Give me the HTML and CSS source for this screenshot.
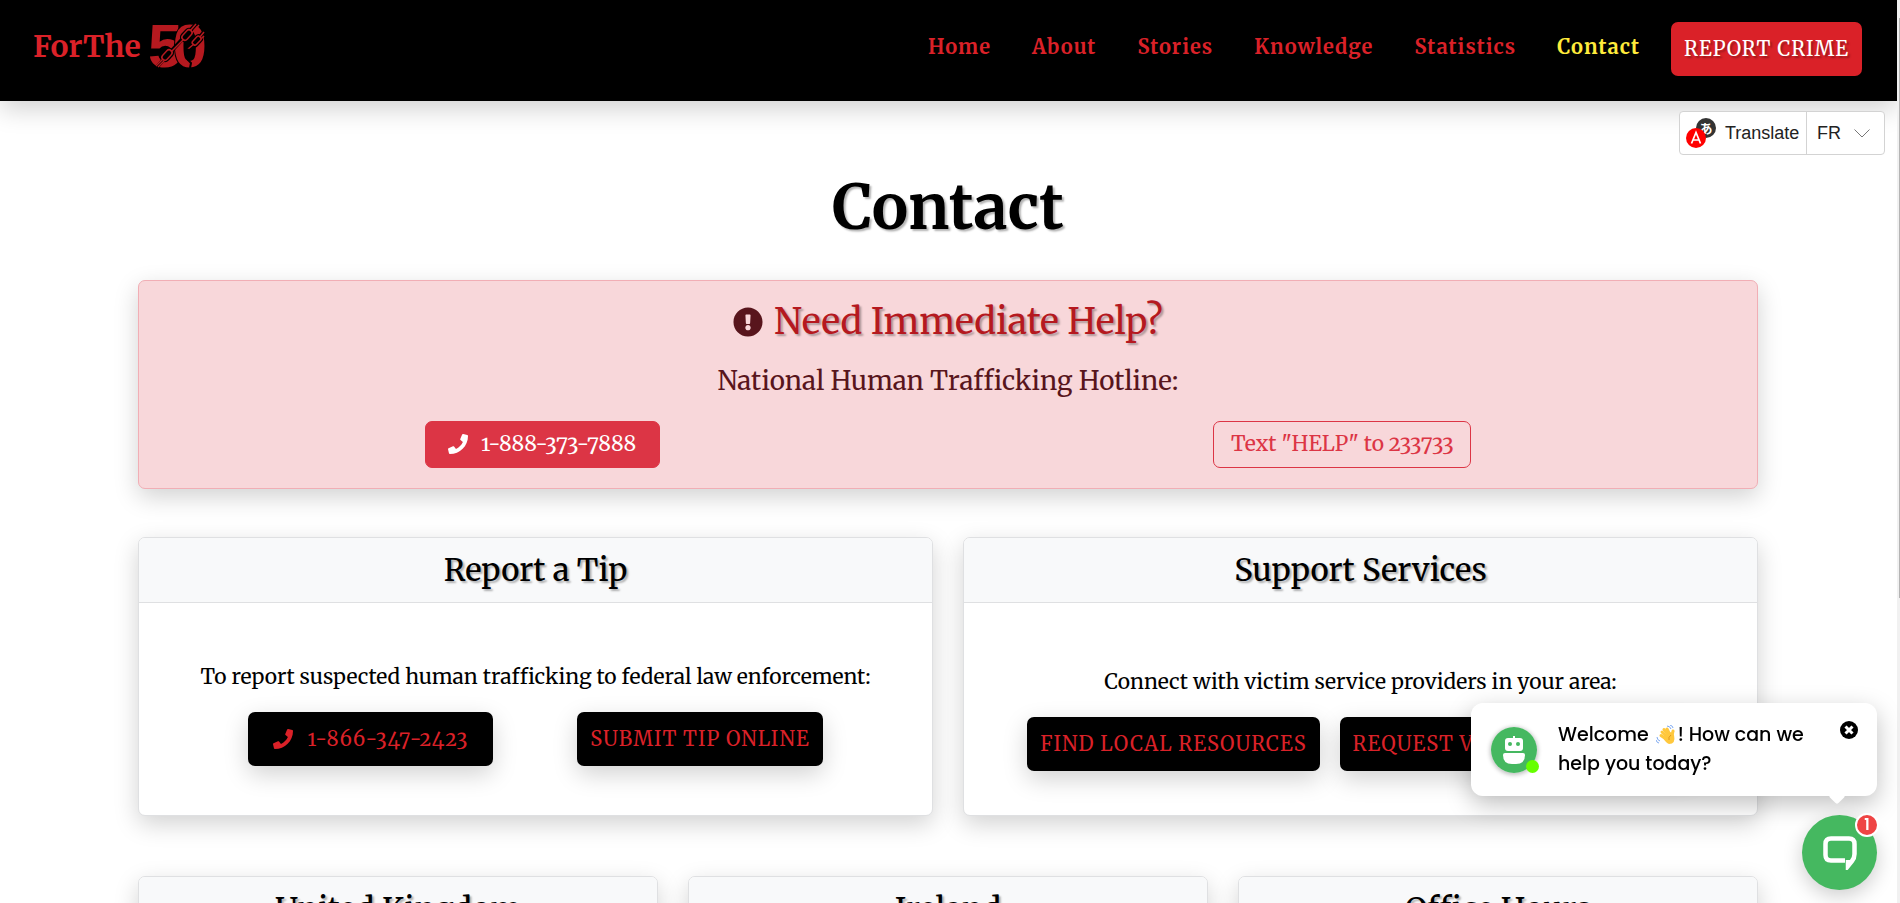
FILE: index.html
```html
<!DOCTYPE html>
<html lang="en">
<head>
<meta charset="utf-8">
<title>Contact | ForThe50</title>
<link rel="stylesheet" href="styles.css">
</head>
<body>
<div class="viewport">
  <div class="page">
    <header class="site-header">
      <a class="brand" href="#">
        <span>ForThe</span>
        <svg class="brand-logo" viewBox="10 14 54 45" role="img" aria-label="50">
          <text class="logo-digits" x="8" y="58">5<tspan class="logo-zero" dx="-10">0</tspan></text>
          <g class="chain-gap">
            <path d="M16 59 L57 14"/>
            <path d="M49 41 L64 23"/>
            <rect x="21" y="43" width="12" height="6" rx="3" transform="rotate(-47 27 46)"/>
            <rect x="41" y="23" width="12" height="6" rx="3" transform="rotate(-47 47 26)"/>
            <rect x="52" y="29" width="10" height="5" rx="2" transform="rotate(-47 57 32)"/>
          </g>
          <g class="chain">
            <path d="M16 57 L23 50 M18 58 L24 52 M31 43 L43 31 M50 22 L56 15 M52 24 L59 16"/>
            <rect x="21" y="43" width="12" height="6" rx="3" transform="rotate(-47 27 46)"/>
            <rect x="41" y="23" width="12" height="6" rx="3" transform="rotate(-47 47 26)"/>
            <rect x="52" y="29" width="10" height="5" rx="2" transform="rotate(-47 57 32)"/>
            <path d="M48 40 L54 35 M60 28 L64 23 M61 30 L64 27"/>
          </g>
          <path class="crack" d="M49 40 l-2 4 l4 3 l-3 4 l3 3 l-1 5"/>
        </svg>
      </a>
      <nav class="site-nav" aria-label="Main">
        <a href="#">Home</a>
        <a href="#">About</a>
        <a href="#">Stories</a>
        <a href="#">Knowledge</a>
        <a href="#">Statistics</a>
        <a class="active" href="#" aria-current="page">Contact</a>
        <a class="report-button" href="#">REPORT CRIME</a>
      </nav>
    </header>

    <div class="translate">
      <button class="translate-main" type="button">
        <svg class="translate-icon" viewBox="0 0 30 30" aria-hidden="true">
          <circle cx="20" cy="10" r="10" fill="#333"/>
          <text class="kana" x="20" y="15">あ</text>
          <circle cx="10" cy="20" r="10" fill="#f00"/>
          <path d="M5.500 25.500 L10 14.500 L14.500 25.500 M7 22 H13" fill="none" stroke="#fff" stroke-width="1.700"/>
        </svg>
        Translate
      </button>
      <button class="translate-lang" type="button">
        FR
        <svg class="chevron" viewBox="0 0 16 9" aria-hidden="true"><path d="M.5 .5 L8 8 L15.500 .5"/></svg>
      </button>
    </div>

    <main class="container">
      <h1>Contact</h1>

      <section class="alert">
        <h2>
          <svg class="alert-icon" viewBox="0 0 512 512" aria-hidden="true"><path d="M504 256c0 137-111 248-248 248S8 393 8 256 119 8 256 8s248 111 248 248zm-248 50c-25.400 0-46 20.600-46 46s20.600 46 46 46 46-20.600 46-46-20.600-46-46-46zm-43.700-165.300l7.400 136c.3 6.400 5.600 11.300 12 11.300h48.500c6.400 0 11.600-5 12-11.300l7.400-136c.4-6.900-5.100-12.700-12-12.700h-63.400c-6.900 0-12.300 5.800-11.900 12.700z"/></svg>
          <span>Need Immediate Help?</span>
        </h2>
        <p>National Human Trafficking Hotline:</p>
        <div class="alert-actions">
          <a class="hotline solid" href="#"><svg class="phone" viewBox="0 0 512 512" aria-hidden="true"><path d="M493.400 24.600l-104-24c-11.300-2.600-22.900 3.300-27.500 13.900l-48 112c-4.200 9.800-1.400 21.300 6.900 28l60.600 49.600c-36 76.700-98.900 140.500-177.200 177.200l-49.600-60.600c-6.800-8.300-18.200-11.100-28-6.900l-112 48C3.900 366.500-2 378.100.6 389.400l24 104C27.100 504.200 36.700 512 48 512c256.100 0 464-207.500 464-464 0-11.200-7.700-20.900-18.600-23.400z"/></svg>1-888-373-7888</a>
          <a class="hotline outline" href="#">Text "HELP" to 233733</a>
        </div>
      </section>

      <div class="cards two">
        <section class="card">
          <h3>Report a Tip</h3>
          <div class="card-body">
            <div class="card-content">
              <p>To report suspected human trafficking to federal law enforcement:</p>
              <div class="split">
                <a class="button" href="#"><svg class="phone" viewBox="0 0 512 512" aria-hidden="true"><path d="M493.400 24.600l-104-24c-11.300-2.600-22.900 3.300-27.500 13.900l-48 112c-4.200 9.800-1.400 21.300 6.900 28l60.600 49.600c-36 76.700-98.900 140.500-177.200 177.200l-49.600-60.600c-6.800-8.300-18.200-11.100-28-6.900l-112 48C3.900 366.500-2 378.100.6 389.400l24 104C27.100 504.200 36.700 512 48 512c256.100 0 464-207.500 464-464 0-11.200-7.700-20.900-18.600-23.400z"/></svg>1-866-347-2423</a>
                <a class="button" href="#">SUBMIT TIP ONLINE</a>
              </div>
            </div>
          </div>
        </section>
        <section class="card">
          <h3>Support Services</h3>
          <div class="card-body lower">
            <div class="card-content">
              <p>Connect with victim service providers in your area:</p>
              <div class="pair">
                <a class="button" href="#">FIND LOCAL RESOURCES</a>
                <a class="button" href="#">REQUEST VICTIM ASSISTANCE</a>
              </div>
            </div>
          </div>
        </section>
      </div>

      <div class="cards three">
        <section class="card"><h3>United Kingdom</h3></section>
        <section class="card"><h3>Ireland</h3></section>
        <section class="card"><h3>Office Hours</h3></section>
      </div>
    </main>
  </div>
  <div class="scroll-track"><div class="scroll-thumb"></div></div>
</div>

<aside class="chat">
  <div class="chat-bubble">
    <div class="avatar">
      <svg viewBox="0 0 46 46" aria-hidden="true">
        <circle cx="23" cy="23" r="23" fill="#45b860"/>
        <g fill="#fff">
          <rect x="22" y="9" width="2" height="4"/>
          <rect x="14" y="11" width="18" height="13" rx="3"/>
          <path d="M12 28q0-2 2-2h18q2 0 2 2q0 9-9 9h-4q-9 0-9-9z"/>
        </g>
        <circle cx="19" cy="17" r="2" fill="#45b860"/>
        <circle cx="27" cy="17" r="2" fill="#45b860"/>
      </svg>
      <span class="online"></span>
    </div>
    <p>Welcome <svg class="wave" viewBox="0 0 20 20" role="img" aria-label="waving hand"><g fill="none" stroke="#ffc83d" stroke-width="3" stroke-linecap="round"><path d="M12 13 L6 7"/><path d="M13 11 L8 4.500"/><path d="M14 10 L11 4"/><path d="M10 14 L5 10.500"/><path d="M16 11 L17 6"/></g><path d="M7 12 L15 7 L18 10 Q20 19 13 19 Q10 18 7 13z" fill="#ffc83d"/><path d="M13 15 Q12 12 15 10" fill="none" stroke="#e09a20"/><path d="M11 1 Q14 1 15 4 M14 0 Q17 1 17 3 M1 12 Q1 15 4 16 M0 15 Q1 18 3 18" fill="none" stroke="#7ba7f0"/></svg>! How can we help you today?</p>
    <button class="chat-close" type="button" aria-label="Close message">
      <svg viewBox="0 0 18 18" aria-hidden="true"><circle cx="9" cy="9" r="9"/><path d="M5.500 5.500 L12.500 12.500 M12.500 5.500 L5.500 12.500" stroke="#fff" stroke-width="3"/></svg>
    </button>
  </div>
  <button class="chat-launch" type="button" aria-label="Open chat, 1 new message">
    <svg viewBox="0 0 34 34" aria-hidden="true"><path d="M22 24.500 H8 Q2.500 24.500 2.500 19 V8 Q2.500 2.500 8 2.500 H26 Q31.500 2.500 31.500 8 V18 Q31.500 22 29 25 L25 30 V24" fill="none" stroke="#fff" stroke-width="4.500"/></svg>
    <span class="badge">1</span>
  </button>
</aside>
</body>
</html>
```
FILE: styles.css
```css
* { box-sizing: border-box; }

body {
  margin: 0;
  background: #fff;
  color: #000;
  font-family: "Merriweather", "DejaVu Serif Condensed", "DejaVu Serif", serif;
  font-size: 20px;
  line-height: 30px;
  font-variant-numeric: oldstyle-nums;
}

h1, h2, h3, p { margin: 0; font-weight: 400; }
a { color: inherit; text-decoration: none; }
button { border: 0; padding: 0; background: none; color: inherit; font: inherit; cursor: pointer; }
svg { display: block; flex: none; }

.viewport { display: flex; height: 100vh; overflow: hidden; }
.page { flex: 1; min-width: 0; }
.scroll-track { width: 3px; background: #f1f1f1; padding: 18px 0 0 2px; }
.scroll-thumb { height: 580px; background: #b4b4b4; }

.site-header {
  display: flex;
  justify-content: space-between;
  align-items: flex-start;
  padding: 22px 35px 25px 33px;
  background: #000;
  color: #da2128;
  box-shadow: 0 8px 24px rgba(0, 0, 0, .18);
}
.brand { display: flex; align-items: center; gap: 9px; padding-top: 1px; font-size: 30px; font-weight: 700; }
.brand-logo { width: 54px; height: 45px; overflow: visible; }
.logo-digits { font: 700 62px "Liberation Sans", sans-serif; fill: #b5191f; }
.logo-zero { stroke: #000; stroke-width: 2; paint-order: stroke; }
.chain-gap { fill: #000; stroke: #000; stroke-width: 4; }
.chain { fill: none; stroke: #b5191f; stroke-width: 1.500; }
.crack { fill: none; stroke: #000; stroke-width: 2; }

.site-nav { display: flex; align-items: flex-start; gap: 41px; font-weight: 700; letter-spacing: 1px; }
.site-nav a { padding: 10px 0; }
.site-nav .active { color: #ffeb3b; }
.site-nav .report-button {
  margin-left: -10px;
  padding: 12px 13px;
  border-radius: 7px;
  background: #da2128;
  color: #fff;
  font-weight: 400;
  text-shadow: 2px 2px 2px rgba(0, 0, 0, .3);
}

.translate {
  display: flex;
  width: 206px;
  height: 44px;
  margin: 10px 12px 0 auto;
  border: 1px solid #d3d3d3;
  border-radius: 4px;
  background: #fff;
  color: #222;
  font: 18px "Liberation Sans", Arial, sans-serif;
}
.translate-main { flex: 1; display: flex; align-items: center; gap: 9px; padding-left: 6px; }
.translate-icon { width: 30px; height: 30px; }
.kana { font: 700 13px "Noto Sans CJK JP", sans-serif; fill: #fff; text-anchor: middle; }
.translate-lang { display: flex; align-items: center; gap: 13px; padding: 0 14px 0 10px; border-left: 1px solid #d3d3d3; }
.chevron { width: 16px; height: 9px; }
.chevron path { fill: none; stroke: #777; }

.container { padding: 0 139px 0 138px; }

h1 {
  padding: 16px 0 36px;
  font-size: 61px;
  line-height: 73px;
  font-weight: 700;
  text-align: center;
  text-shadow: 2px 2px 2px rgba(0, 0, 0, .3);
}

.alert {
  padding: 20px 9px;
  border: 1px solid #f1aeb5;
  border-radius: 7px;
  background: #f8d7da;
  color: #58151c;
  text-align: center;
  box-shadow: 0 8px 24px rgba(0, 0, 0, .18);
}
.alert h2 {
  display: flex;
  justify-content: center;
  align-items: center;
  gap: 11px;
  color: #b5191f;
  font-size: 36px;
  line-height: 42px;
  text-shadow: 2px 2px 2px rgba(0, 0, 0, .3);
}
.alert-icon { width: 30px; height: 30px; fill: #58151c; }
.alert p { padding: 18px 0 20px; font-size: 26px; line-height: 40px; }
.alert-actions { display: flex; justify-content: space-around; }
.hotline {
  display: flex;
  align-items: center;
  justify-content: center;
  gap: 13px;
  min-width: 235px;
  padding: 7px 17px 8px;
  border: 1px solid #dc3545;
  border-radius: 7px;
  font-size: 21px;
}
.solid { background: #dc3545; color: #fff; }
.outline { color: #dc3545; }
.phone { width: 20px; height: 20px; fill: currentColor; }

.cards { display: grid; gap: 30px; }
.two { grid-template-columns: repeat(2, 1fr); margin-top: 48px; }
.three { grid-template-columns: repeat(3, 1fr); margin-top: 60px; }
.card {
  display: flex;
  flex-direction: column;
  border: 1px solid #dfe0e2;
  border-radius: 7px;
  background: #fff;
  box-shadow: 0 8px 24px rgba(0, 0, 0, .18);
  text-align: center;
}
.card h3 {
  padding: 12px 0;
  border-bottom: 1px solid #dfe0e2;
  border-radius: 6px 6px 0 0;
  background: #f8f9fa;
  font-size: 31px;
  line-height: 40px;
  font-weight: 500;
  text-shadow: 2px 2px 2px rgba(0, 0, 0, .3);
}
.card-body { display: flex; justify-content: center; padding: 59px 0 49px; }
.lower { padding: 64px 0 44px; }
.card-content { display: grid; gap: 20px; }
.card p { font-size: 21px; }
.split { display: flex; justify-content: space-around; padding: 0 6px; }
.split .button { min-width: 245px; }
.pair { display: flex; justify-content: center; gap: 20px; }
.button {
  display: flex;
  align-items: center;
  justify-content: center;
  gap: 14px;
  padding: 12px 13px;
  border-radius: 7px;
  background: #000;
  color: #da2128;
  letter-spacing: 1px;
  box-shadow: 0 8px 24px rgba(0, 0, 0, .18);
}

.chat {
  position: fixed;
  right: 23px;
  bottom: 13px;
  display: flex;
  flex-direction: column;
  align-items: flex-end;
  gap: 19px;
  font-family: "Poppins", "Inter", sans-serif;
  font-variant-numeric: normal;
}
.chat-bubble {
  position: relative;
  display: flex;
  width: 406px;
  padding: 17px 19px 18px 20px;
  border-radius: 12px;
  background: #fff;
  font-size: 19px;
  line-height: 29px;
  box-shadow: 0 8px 24px rgba(0, 0, 0, .25);
}
.chat-bubble::after {
  content: "";
  position: absolute;
  right: 34px;
  bottom: -6px;
  width: 12px;
  height: 12px;
  border-radius: 2px;
  background: #fff;
  transform: rotate(45deg);
}
.chat-bubble p { flex: 1; padding-left: 21px; font-weight: 500; }
.avatar { position: relative; width: 46px; height: 46px; margin-top: 7px; border-radius: 50%; box-shadow: 0 1px 4px 1px rgba(0, 0, 0, .25); }
.online { position: absolute; right: -2px; bottom: 0; width: 13px; height: 13px; border-radius: 50%; background: #6f0; }
.wave { display: inline-block; width: 20px; height: 20px; margin: 0 2px; vertical-align: -4px; }
.chat-close { align-self: flex-start; width: 18px; height: 18px; margin-top: 1px; }
.chat-launch {
  position: relative;
  display: grid;
  place-items: center;
  width: 75px;
  height: 75px;
  border-radius: 50%;
  background: #45b860;
  box-shadow: 0 6px 20px rgba(0, 0, 0, .2);
}
.chat-launch svg { width: 34px; height: 34px; }
.badge {
  position: absolute;
  top: -2px;
  right: -2px;
  width: 24px;
  height: 24px;
  border: 2px solid #fff;
  border-radius: 50%;
  background: #ef4444;
  color: #fff;
  font-size: 15px;
  line-height: 20px;
  font-weight: 600;
}
```
